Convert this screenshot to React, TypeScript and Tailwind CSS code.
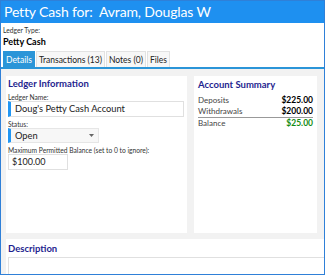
const tabs = [
  { label: "Details", active: true },
  { label: "Transactions (13)", active: false },
  { label: "Notes (0)", active: false },
  { label: "Files", active: false },
]

function Field({ label, children }: { label: string; children: React.ReactNode }) {
  return (
    <div className="mt-[3px]">
      <div className="text-[6.7px] leading-[8px] text-[#333]">{label}</div>
      {children}
    </div>
  )
}

export default function App() {
  return (
    <div
      className="w-[325px] h-[275px] overflow-hidden border border-[#2f80d8] bg-white flex flex-col"
      style={{ fontFamily: 'Lato, "Noto Sans", sans-serif' }}
    >
      <div className="h-[22px] shrink-0 bg-[#1e90f0] text-white text-[14px] leading-[22px] px-[3px] tracking-[-0.15px] whitespace-pre">
        Petty Cash for:  Avram, Douglas W
      </div>
      <div className="px-[2px] pt-[3px]">
        <div className="text-[6.7px] leading-[9px] text-[#333]">Ledger Type:</div>
        <div className="text-[9px] leading-[13px] font-bold text-black">Petty Cash</div>
      </div>
      <div className="flex mt-[3px] px-[2px] border-b-2 border-[#2b95d8]">
        {tabs.map((t) => (
          <div
            key={t.label}
            className={`h-[16px] px-[2px] mr-[1px] text-[8.5px] leading-[16px] border border-b-0 ${
              t.active ? "bg-[#2b95d8] text-white border-[#2b95d8]" : "bg-[#f7f7f7] text-[#222] border-[#e2e2e2]"
            }`}
          >
            {t.label}
          </div>
        ))}
      </div>
      <div className="flex-1 bg-[#f2f2f2] pt-[7px] pl-[5px]">
        <div className="flex gap-[7px] h-[157px]">
          <div className="w-[181px] bg-white px-[2px] pt-[2px]">
            <div className="text-[9.5px] leading-[12px] font-bold text-[#1f1f8f]">Ledger Information</div>
            <Field label="Ledger Name:">
              <div className="h-[16px] w-[176px] border border-[#e0e0e0] border-l-[3px] border-l-[#2196f3] text-[9.3px] leading-[14px] pl-[4px] text-[#222]">
                Doug&apos;s Petty Cash Account
              </div>
            </Field>
            <Field label="Status:">
              <div className="h-[15px] w-[91px] bg-[#f7f7f7] border border-[#e6e6e6] border-l-[3px] border-l-[#2196f3] text-[9.3px] leading-[13px] pl-[4px] text-[#222] flex items-center justify-between pr-[4px]">
                <span>Open</span>
                <svg width="5" height="3" viewBox="0 0 5 3">
                  <path d="M0 0h5L2.5 3z" fill="#666" />
                </svg>
              </div>
            </Field>
            <Field label="Maximum Permitted Balance (set to 0 to ignore):">
              <div className="h-[16px] w-[60px] border border-[#e0e0e0] text-[9px] leading-[14px] pl-[3px] text-[#222]">
                $100.00
              </div>
            </Field>
          </div>
          <div className="w-[123px] bg-white px-[4px] pt-[3px]">
            <div className="text-[9.5px] leading-[12px] font-bold text-[#1f1f8f]">Account Summary</div>
            <div className="mt-[4px] text-[8px] leading-[11px]">
              <div className="flex justify-between">
                <span className="text-[#444]">Deposits</span>
                <span className="font-bold text-black text-[8.5px]">$225.00</span>
              </div>
              <div className="flex justify-between border-b border-[#999]">
                <span className="text-[#444]">Withdrawals</span>
                <span className="font-bold text-black text-[8.5px]">$200.00</span>
              </div>
              <div className="flex justify-between">
                <span className="text-[#444]">Balance</span>
                <span className="font-bold text-[#128c12] text-[8.5px]">$25.00</span>
              </div>
            </div>
          </div>
        </div>
        <div className="mt-[6px] bg-white pl-[2px] pt-[4px] h-[40px]">
          <div className="text-[9.5px] leading-[12px] font-bold text-[#1f1f8f]">Description</div>
          <div className="mt-[2px] h-[30px] border border-[#e0e0e0] border-r-0" />
        </div>
      </div>
    </div>
  )
}
